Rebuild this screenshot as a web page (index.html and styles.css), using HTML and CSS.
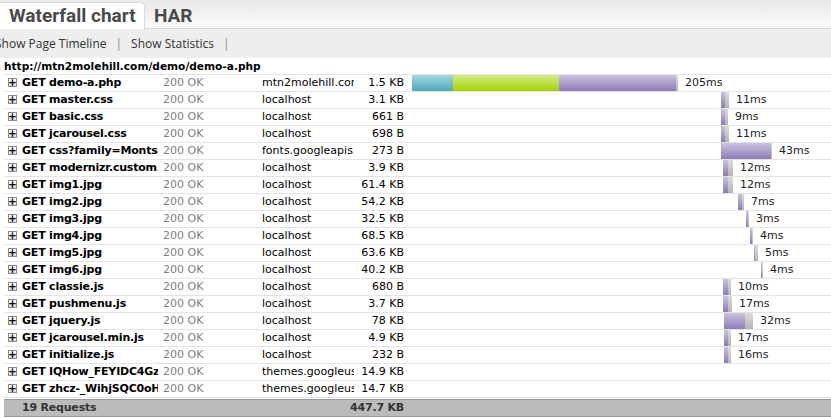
FILE: index.html
```html
<!DOCTYPE html>
<html>
<head>
<meta charset="utf-8">
<link rel="stylesheet" href="styles.css">
</head>
<body>
<div class="tabs">
  <div class="tab active">Waterfall chart</div>
  <div class="tab">HAR</div>
</div>
<div class="toolbar">
  <span class="tool">Show Page Timeline</span><span class="sep">|</span><span class="tool">Show Statistics</span><span class="sep">|</span>
</div>
<div class="url">http://mtn2molehill.com/demo/demo-a.php</div>
<div class="net">
  <div class="row"><span class="exp"></span><span class="name">GET demo-a.php</span><span class="status">200 OK</span><span class="domain">mtn2molehill.com</span><span class="size">1.5 KB</span><span class="tl" style="padding-left:4px"><i class="seg dns" style="width:41px"></i><i class="seg connect" style="width:106px"></i><i class="seg wait" style="width:117px"></i><i class="seg recv" style="width:2px"></i><b class="ms">205ms</b></span></div>
  <div class="row"><span class="exp"></span><span class="name">GET master.css</span><span class="status">200 OK</span><span class="domain">localhost</span><span class="size">3.1 KB</span><span class="tl" style="padding-left:313px"><i class="seg wait" style="width:4px"></i><i class="seg recv" style="width:4px"></i><b class="ms">11ms</b></span></div>
  <div class="row"><span class="exp"></span><span class="name">GET basic.css</span><span class="status">200 OK</span><span class="domain">localhost</span><span class="size">661 B</span><span class="tl" style="padding-left:313px"><i class="seg wait" style="width:4px"></i><i class="seg recv" style="width:3px"></i><b class="ms">9ms</b></span></div>
  <div class="row"><span class="exp"></span><span class="name">GET jcarousel.css</span><span class="status">200 OK</span><span class="domain">localhost</span><span class="size">698 B</span><span class="tl" style="padding-left:313px"><i class="seg wait" style="width:4px"></i><i class="seg recv" style="width:4px"></i><b class="ms">11ms</b></span></div>
  <div class="row"><span class="exp"></span><span class="name">GET css?family=Montserrat</span><span class="status">200 OK</span><span class="domain">fonts.googleapis.com</span><span class="size">273 B</span><span class="tl" style="padding-left:313px"><i class="seg wait" style="width:50px"></i><i class="seg recv" style="width:1px"></i><b class="ms">43ms</b></span></div>
  <div class="row"><span class="exp"></span><span class="name">GET modernizr.custom.js</span><span class="status">200 OK</span><span class="domain">localhost</span><span class="size">3.9 KB</span><span class="tl" style="padding-left:315px"><i class="seg wait" style="width:5px"></i><i class="seg recv" style="width:5px"></i><b class="ms">12ms</b></span></div>
  <div class="row"><span class="exp"></span><span class="name">GET img1.jpg</span><span class="status">200 OK</span><span class="domain">localhost</span><span class="size">61.4 KB</span><span class="tl" style="padding-left:315px"><i class="seg wait" style="width:5px"></i><i class="seg recv" style="width:5px"></i><b class="ms">12ms</b></span></div>
  <div class="row"><span class="exp"></span><span class="name">GET img2.jpg</span><span class="status">200 OK</span><span class="domain">localhost</span><span class="size">54.2 KB</span><span class="tl" style="padding-left:330px"><i class="seg wait" style="width:4px"></i><i class="seg recv" style="width:2px"></i><b class="ms">7ms</b></span></div>
  <div class="row"><span class="exp"></span><span class="name">GET img3.jpg</span><span class="status">200 OK</span><span class="domain">localhost</span><span class="size">32.5 KB</span><span class="tl" style="padding-left:338px"><i class="seg wait" style="width:2px"></i><i class="seg recv" style="width:1px"></i><b class="ms">3ms</b></span></div>
  <div class="row"><span class="exp"></span><span class="name">GET img4.jpg</span><span class="status">200 OK</span><span class="domain">localhost</span><span class="size">68.5 KB</span><span class="tl" style="padding-left:342px"><i class="seg wait" style="width:2px"></i><i class="seg recv" style="width:1px"></i><b class="ms">4ms</b></span></div>
  <div class="row"><span class="exp"></span><span class="name">GET img5.jpg</span><span class="status">200 OK</span><span class="domain">localhost</span><span class="size">63.6 KB</span><span class="tl" style="padding-left:346px"><i class="seg wait" style="width:1px"></i><i class="seg recv" style="width:3px"></i><b class="ms">5ms</b></span></div>
  <div class="row"><span class="exp"></span><span class="name">GET img6.jpg</span><span class="status">200 OK</span><span class="domain">localhost</span><span class="size">40.2 KB</span><span class="tl" style="padding-left:353px"><i class="seg wait" style="width:1px"></i><i class="seg recv" style="width:1px"></i><b class="ms">4ms</b></span></div>
  <div class="row"><span class="exp"></span><span class="name">GET classie.js</span><span class="status">200 OK</span><span class="domain">localhost</span><span class="size">680 B</span><span class="tl" style="padding-left:315px"><i class="seg wait" style="width:5px"></i><i class="seg recv" style="width:3px"></i><b class="ms">10ms</b></span></div>
  <div class="row"><span class="exp"></span><span class="name">GET pushmenu.js</span><span class="status">200 OK</span><span class="domain">localhost</span><span class="size">3.7 KB</span><span class="tl" style="padding-left:315px"><i class="seg wait" style="width:5px"></i><i class="seg recv" style="width:4px"></i><b class="ms">17ms</b></span></div>
  <div class="row"><span class="exp"></span><span class="name">GET jquery.js</span><span class="status">200 OK</span><span class="domain">localhost</span><span class="size">78 KB</span><span class="tl" style="padding-left:316px"><i class="seg wait" style="width:21px"></i><i class="seg recv" style="width:8px"></i><b class="ms">32ms</b></span></div>
  <div class="row"><span class="exp"></span><span class="name">GET jcarousel.min.js</span><span class="status">200 OK</span><span class="domain">localhost</span><span class="size">4.9 KB</span><span class="tl" style="padding-left:316px"><i class="seg wait" style="width:4px"></i><i class="seg recv" style="width:3px"></i><b class="ms">17ms</b></span></div>
  <div class="row"><span class="exp"></span><span class="name">GET initialize.js</span><span class="status">200 OK</span><span class="domain">localhost</span><span class="size">232 B</span><span class="tl" style="padding-left:316px"><i class="seg wait" style="width:4px"></i><i class="seg recv" style="width:3px"></i><b class="ms">16ms</b></span></div>
  <div class="row"><span class="exp"></span><span class="name">GET IQHow_FEYIDC4GzRh0</span><span class="status">200 OK</span><span class="domain">themes.googleusercontent.com</span><span class="size">14.9 KB</span><span class="tl"></span></div>
  <div class="row"><span class="exp"></span><span class="name">GET zhcz-_WihjSQC0oHJ</span><span class="status">200 OK</span><span class="domain">themes.googleusercontent.com</span><span class="size">14.7 KB</span><span class="tl"></span></div>
  <div class="row summary"><span class="exp"></span><span class="name">19 Requests</span><span class="status"></span><span class="domain"></span><span class="size">447.7 KB</span><span class="tl"></span></div>
</div>
</body>
</html>
```
FILE: styles.css
```css
html, body {
  margin: 0;
  padding: 0;
  background: #fff;
  overflow: hidden;
}
body {
  font-family: "DejaVu Sans", sans-serif;
  font-size: 11px;
  color: #000;
  width: 831px;
  height: 418px;
}
.tabs {
  height: 28px;
  border-bottom: 1px solid #d6d6d6;
  background: linear-gradient(#e7e9e9, #fbfbfb);
  display: flex;
  align-items: flex-end;
}
.tab {
  font-family: Roboto, sans-serif;
  font-weight: bold;
  font-size: 19px;
  color: #4a4a4a;
  height: 26px;
  line-height: 25px;
  padding: 0 8px 0 9px;
  margin-bottom: -1px;
}
.tab.active {
  background: #fff;
  border: 1px solid #dadada;
  border-bottom: none;
  border-left: none;
  border-radius: 0 5px 0 0;
  width: 127px;
}
.toolbar {
  height: 29px;
  background: #eeeeee;
  font-family: "Open Sans", sans-serif;
  font-size: 12px;
  line-height: 29px;
  color: #333;
  white-space: nowrap;
  display: flex;
  margin-left: -5px;
}
.sep {
  margin: 0 9px 0 9px;
  color: #8a8a8a;
}
.url {
  height: 16px;
  line-height: 17px;
  font-weight: bold;
  font-size: 10.6px;
  padding-left: 4px;
}
.net {
  margin-left: 4px;
  border-top: 1px solid #e4e4e4;
}
.row {
  display: grid;
  grid-template-columns: 18px 136px 104px 92px 54px 1fr;
  height: 16px;
  line-height: 16px;
  border-bottom: 1px solid #e4e4e4;
  white-space: nowrap;
}
.exp {
  position: relative;
}
.exp::before {
  content: "";
  position: absolute;
  left: 4px;
  top: 3px;
  width: 7px;
  height: 7px;
  border: 1px solid #8c8c8c;
  background: linear-gradient(#ffffff, #dcdcdc);
}
.exp::after {
  content: "+";
  position: absolute;
  left: 4px;
  top: 0px;
  width: 9px;
  text-align: center;
  font-weight: bold;
  font-size: 10px;
  line-height: 15px;
  color: #000;
}
.name {
  font-weight: bold;
  overflow: hidden;
  letter-spacing: -0.2px;
}
.status {
  color: #7f7f7f;
  padding-left: 5px;
}
.domain {
  overflow: hidden;
}
.size {
  display: flex;
  justify-content: flex-end;
  padding-right: 4px;
}
.tl {
  display: flex;
  align-items: stretch;
}
.seg {
  display: block;
  flex: none;
}
.dns { background: linear-gradient(#a6d8e0, #4fa8ba); }
.connect { background: linear-gradient(#d3ec8c, #a3d300); }
.wait { background: linear-gradient(#cbc2df, #8e7bb7); }
.recv { background: linear-gradient(#dcdcdc, #b4b4b4); }
.ms {
  font-weight: normal;
  margin-left: 7px;
  color: #222;
}
.summary {
  background: #bbbbbb;
  border-top: 1px solid #999;
  border-bottom: 1px solid #999;
  margin-top: 1px;
}
.summary .exp::before, .summary .exp::after {
  display: none;
}
.summary .name, .summary .size {
  color: #333;
}
.summary .size {
  font-weight: bold;
  letter-spacing: -0.2px;
}
```
